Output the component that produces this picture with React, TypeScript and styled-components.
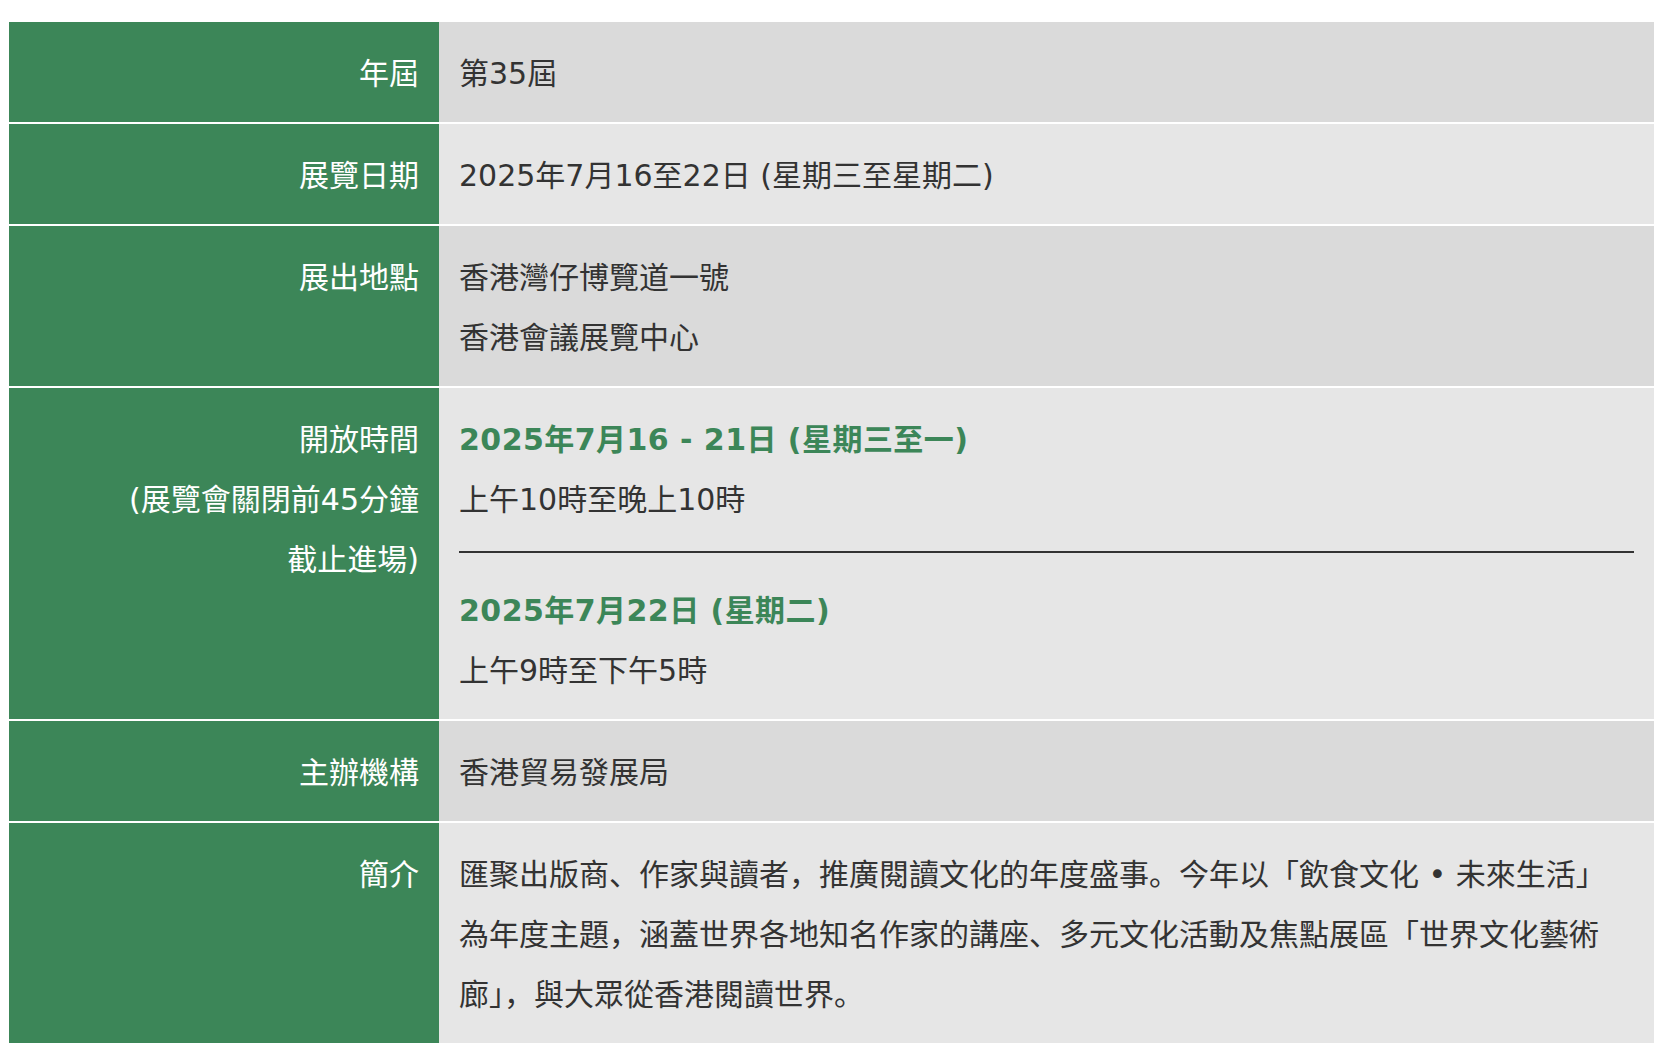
import React from "react";
import styled, { createGlobalStyle } from "styled-components";

const GlobalStyle = createGlobalStyle`
  html, body {
    margin: 0;
    padding: 0;
    background: #ffffff;
  }
  body {
    font-family: "DejaVu Sans", Verdana, "Noto Sans CJK SC", "Noto Sans CJK TC", sans-serif;
  }
`;

const Page = styled.div`
  padding: 22px 10px 0 9px;
`;

const InfoTable = styled.div`
  display: grid;
  grid-template-columns: 430px 1fr;
  row-gap: 2px;
  background: #ffffff;
`;

const Label = styled.div`
  background: #3c8658;
  color: #ffffff;
  font-size: 30px;
  line-height: 60px;
  text-align: right;
  padding: 22px 20px 18px 20px;
`;

const Value = styled.div<{ $shade: "dark" | "light" }>`
  background: ${(p) => (p.$shade === "dark" ? "#dadada" : "#e6e6e6")};
  color: #333333;
  font-size: 30px;
  line-height: 60px;
  padding: 22px 20px 18px 20px;
  min-width: 0;
`;

const Line = styled.div``;

const Heading = styled.div`
  color: #3c8658;
  font-weight: bold;
  letter-spacing: 0.45px;
`;

const Divider = styled.div`
  height: 2px;
  background: #333333;
  margin: 21px 0 28px;
`;

const Paragraph = styled.p`
  margin: 0;
  line-break: strict;
`;

export default function App() {
  return (
    <>
      <GlobalStyle />
      <Page>
        <InfoTable>
          <Label>年屆</Label>
          <Value $shade="dark">
            <Line>第35屆</Line>
          </Value>

          <Label>展覽日期</Label>
          <Value $shade="light">
            <Line>2025年7月16至22日 (星期三至星期二)</Line>
          </Value>

          <Label>展出地點</Label>
          <Value $shade="dark">
            <Line>香港灣仔博覽道一號</Line>
            <Line>香港會議展覽中心</Line>
          </Value>

          <Label>
            <Line>開放時間</Line>
            <Line>(展覽會關閉前45分鐘</Line>
            <Line>截止進場)</Line>
          </Label>
          <Value $shade="light">
            <Heading>2025年7月16 - 21日 (星期三至一)</Heading>
            <Line>上午10時至晚上10時</Line>
            <Divider />
            <Heading>2025年7月22日 (星期二)</Heading>
            <Line>上午9時至下午5時</Line>
          </Value>

          <Label>主辦機構</Label>
          <Value $shade="dark">
            <Line>香港貿易發展局</Line>
          </Value>

          <Label>簡介</Label>
          <Value $shade="light">
            <Paragraph>
              匯聚出版商、作家與讀者，推廣閱讀文化的年度盛事。今年以「飲食文化 • 未來生活」為年度主題，涵蓋世界各地知名作家的講座、多元文化活動及焦點展區「世界文化藝術廊」，與大眾從香港閱讀世界。
            </Paragraph>
          </Value>
        </InfoTable>
      </Page>
    </>
  );
}
